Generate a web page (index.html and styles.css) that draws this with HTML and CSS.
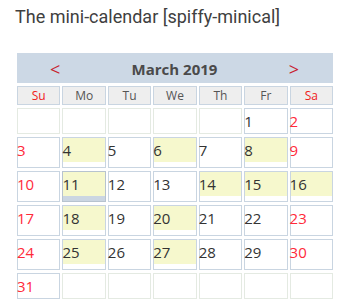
FILE: index.html
```html
<!DOCTYPE html>
<html>
<head>
<meta charset="utf-8">
<link rel="stylesheet" href="styles.css">
</head>
<body>
<h2 class="title">The mini-calendar [spiffy-minical]</h2>
<div class="cal">
  <div class="head">
    <span class="nav">&lt;</span>
    <span class="month">March 2019</span>
    <span class="nav">&gt;</span>
  </div>
  <div class="dn we">Su</div><div class="dn">Mo</div><div class="dn">Tu</div><div class="dn">We</div><div class="dn">Th</div><div class="dn">Fr</div><div class="dn we">Sa</div>

  <div class="c empty"></div><div class="c empty"></div><div class="c empty"></div><div class="c empty"></div><div class="c empty"></div><div class="c"><div class="n">1</div></div><div class="c we"><div class="n">2</div></div>

  <div class="c we"><div class="n">3</div></div><div class="c ev"><div class="n">4</div></div><div class="c"><div class="n">5</div></div><div class="c ev"><div class="n">6</div></div><div class="c"><div class="n">7</div></div><div class="c ev"><div class="n">8</div></div><div class="c we"><div class="n">9</div></div>

  <div class="c we"><div class="n">10</div></div><div class="c ev today"><div class="n">11</div></div><div class="c"><div class="n">12</div></div><div class="c"><div class="n">13</div></div><div class="c ev"><div class="n">14</div></div><div class="c ev"><div class="n">15</div></div><div class="c ev"><div class="n">16</div></div>

  <div class="c we"><div class="n">17</div></div><div class="c ev"><div class="n">18</div></div><div class="c"><div class="n">19</div></div><div class="c ev"><div class="n">20</div></div><div class="c"><div class="n">21</div></div><div class="c"><div class="n">22</div></div><div class="c we"><div class="n">23</div></div>

  <div class="c we"><div class="n">24</div></div><div class="c ev"><div class="n">25</div></div><div class="c"><div class="n">26</div></div><div class="c ev"><div class="n">27</div></div><div class="c"><div class="n">28</div></div><div class="c"><div class="n">29</div></div><div class="c we"><div class="n">30</div></div>

  <div class="c we"><div class="n">31</div></div><div class="c empty"></div><div class="c empty"></div><div class="c empty"></div><div class="c empty"></div><div class="c empty"></div><div class="c empty"></div>
</div>
<div class="rule"></div>
</body>
</html>
```
FILE: styles.css
```css
html, body {
  margin: 0;
  padding: 0;
  background: #fff;
}
.title {
  margin: 0;
  padding: 6px 0 0 15px;
  font-family: Roboto, "Liberation Sans", sans-serif;
  font-weight: 400;
  font-size: 18px;
  line-height: 21px;
  color: #404040;
}
.cal {
  margin: 26px 0 0 17px;
  width: 316px;
  display: grid;
  grid-template-columns: repeat(7, 1fr);
  column-gap: 2px;
  row-gap: 3px;
  font-family: "Open Sans", "DejaVu Sans", sans-serif;
}
.head {
  grid-column: 1 / -1;
  height: 30px;
  background: #ccd8e5;
  display: flex;
  align-items: center;
  justify-content: space-between;
  padding: 1px 34px 0 33px;
  box-sizing: border-box;
}
.month {
  font-weight: 700;
  font-size: 15px;
  color: #4a4a4a;
}
.nav {
  font-size: 18px;
  color: #c8232e;
  line-height: 20px;
}
.dn {
  background: #eeeeee;
  border: 1px solid #c9d5e1;
  height: 17px;
  font-size: 12px;
  line-height: 17px;
  text-align: center;
  color: #555;
}
.dn.we {
  color: #f02020;
}
.c {
  border: 1px solid #c9d5e1;
  background: #fff;
  min-height: 24px;
}
.c.empty {
  border-color: #e4eae2;
}
.n {
  font-size: 15px;
  line-height: 24px;
  height: 24px;
  color: #333;
  text-indent: -1px;
}
.c.we .n {
  color: #ff2a3a;
}
.c.ev {
  padding-bottom: 5px;
}
.c.ev .n {
  background: #f6f8cd;
}
.c.today {
  background: #cbd6e2;
  border-color: #b7c3cf;
}
.rule {
  margin: 7px 0 0 15px;
  width: 318px;
  height: 1px;
  background: #dddddd;
}
```
